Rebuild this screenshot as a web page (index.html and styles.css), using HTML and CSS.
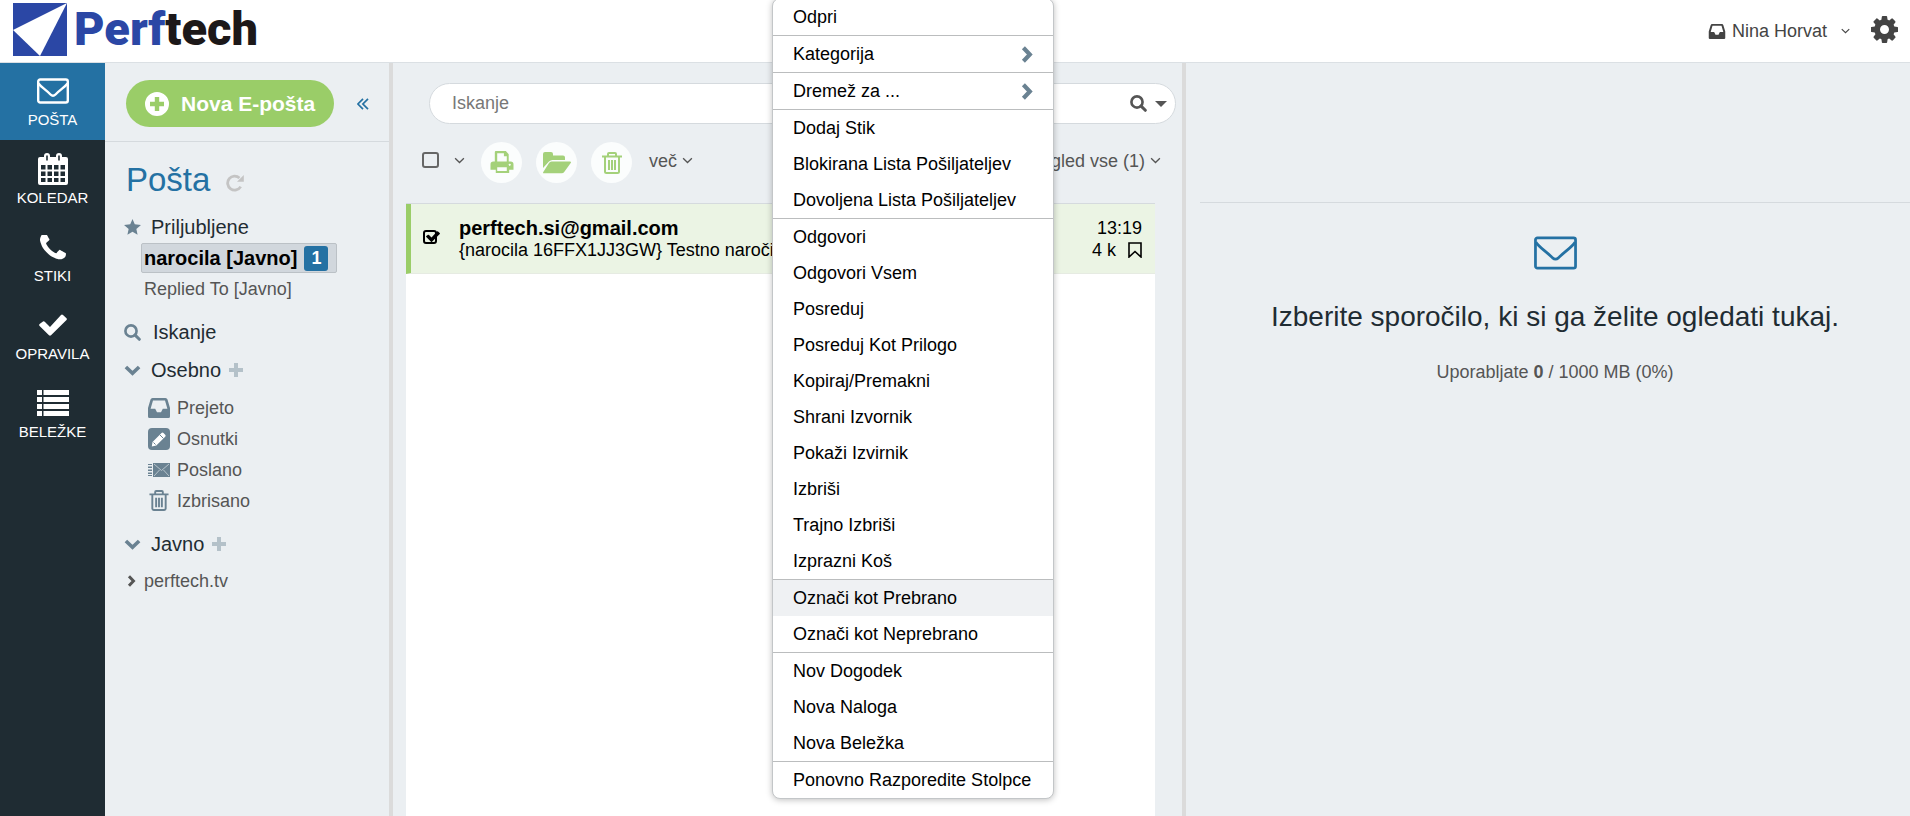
FILE: index.html
```html
<!DOCTYPE html>
<html lang="sl">
<head>
<meta charset="utf-8">
<title>Perftech – Pošta</title>
<link rel="stylesheet" href="styles.css">
</head>
<body>
<svg class="sprite" aria-hidden="true">
  <symbol id="mail" viewBox="0 0 32 26"><rect x="1.2" y="1.5" width="29.6" height="23" rx="2" fill="none" stroke="currentColor" stroke-width="2.4"/><path d="M1.5 5.500C4 9 8 11 13.500 16.500Q16 19 18.500 16.500C24 11 28 9 30.500 5.500" fill="none" stroke="currentColor" stroke-width="2.400"/></symbol>
  <symbol id="calendar" viewBox="0 0 30 32"><path fill="currentColor" fill-rule="evenodd" d="M2 4h4V3a3 3 0 0 1 6 0v1h6V3a3 3 0 0 1 6 0v1h4a2 2 0 0 1 2 2v24a2 2 0 0 1-2 2H2a2 2 0 0 1-2-2V6a2 2 0 0 1 2-2zM8.200 2.500v5h1.600v-5zm12 0v5h1.600v-5zM3 12v4.500h4.500V12zm6.500 0v4.500H14V12zm6.500 0v4.500h4.500V12zm6.500 0v4.500H27V12zM3 18.500V23h4.500v-4.500zm6.500 0V23H14v-4.500zm6.500 0V23h4.500v-4.500zm6.500 0V23H27v-4.500zM3 25v4h4.500v-4zm6.500 0v4H14v-4zm6.500 0v4h4.500v-4zm6.500 0v4H27v-4z"/></symbol>
  <symbol id="phone" viewBox="192 256 1408 1280"><path fill="currentColor" d="M1600 1240q0 27-10 70.500t-21 68.500q-21 50-122 106-94 51-186 51-27 0-53-3.500t-57.500-12.500-47-14.500-55.500-20.500-49-18q-98-35-175-83-127-79-264-216t-216-264q-48-77-83-175-3-9-18-49t-20.500-55.500-14.500-47-12.500-57.500-3.500-53q0-92 51-186 56-101 106-122 25-11 68.500-21t70.500-10q14 0 21 3 18 6 53 76 11 19 30 54t35 63.500 31 53.500q3 4 17.500 25t21.500 35.500 7 28.500q0 20-28.500 50t-62 55-62 53-28.500 46q0 9 5 22.500t8.500 20.500 14 24 11.500 19q76 137 174 235t235 174q2 1 19 11.500t24 14 20.500 8.500 22.500 5q18 0 46-28.500t53-62 55-62 50-28.500q14 0 28.500 7t35.500 21.500 25 17.500q25 15 53.500 31t63.500 35 54 30q70 35 76 53 3 7 3 21z"/></symbol>
  <symbol id="check" viewBox="0 0 28 22"><path fill="currentColor" d="M4 7.500Q5 7 6 8l5 5L22 1q1-1 2 0l3.500 3.200q.8.800 0 1.800L12 21.300q-1 .9-2 0L.6 12q-.9-1 0-2z"/></symbol>
  <symbol id="list" viewBox="0 0 32 26"><path fill="currentColor" d="M0 0h5v5H0zM6.500 0H32v5H6.500zM0 7h5v5H0zM6.500 7H32v5H6.500zM0 14h5v5H0zM6.500 14H32v5H6.500zM0 21h5v5H0zM6.500 21H32v5H6.500z"/></symbol>
  <symbol id="plus-circle" viewBox="0 0 24 24"><path fill="currentColor" fill-rule="evenodd" d="M12 0a12 12 0 1 1 0 24 12 12 0 0 1 0-24zM9.800 5v4.800H5v4.400h4.800V19h4.400v-4.800H19V9.800h-4.800V5z"/></symbol>
  <symbol id="dbl-left" viewBox="0 0 12 12"><path d="M6 .8.900 6 6 11.200M11 .8 5.900 6l5.100 5.200" fill="none" stroke="currentColor" stroke-width="1.700"/></symbol>
  <symbol id="refresh" viewBox="0 0 18 18"><path d="M14.700 12.600A7 7 0 1 1 13.500 4" fill="none" stroke="currentColor" stroke-width="2.800"/><path d="M17.800 1v6.800H11z" fill="currentColor"/></symbol>
  <symbol id="star" viewBox="0 0 18 17"><path fill="currentColor" d="M9 0l2.400 5.600 6.600.7-4.900 4.200 1.300 6.200L9 13.600l-5.400 3.100 1.300-6.200L0 6.300l6.600-.7z"/></symbol>
  <symbol id="search" viewBox="0 0 18 18"><circle cx="7.400" cy="7.400" r="5.900" fill="none" stroke="currentColor" stroke-width="2.800"/><path d="M11.800 11.800l4.400 4.400" stroke="currentColor" stroke-width="3.200" stroke-linecap="round"/></symbol>
  <symbol id="chev-down" viewBox="0 0 18 12"><path d="M1.800 2.200 9 9l7.200-6.800" fill="none" stroke="currentColor" stroke-width="4"/></symbol>
  <symbol id="chev-right" viewBox="0 0 12 18"><path d="M2.200 1.800 9 9l-6.800 7.200" fill="none" stroke="currentColor" stroke-width="4.400"/></symbol>
  <symbol id="angle" viewBox="0 0 12 8"><path d="M1 1.500 6 6.300l5-4.800" fill="none" stroke="currentColor" stroke-width="1.500"/></symbol>
  <symbol id="plus" viewBox="0 0 14 14"><path d="M7 0v14M0 7h14" stroke="currentColor" stroke-width="4"/></symbol>
  <symbol id="inbox" viewBox="0 0 22 20"><path fill="currentColor" fill-rule="evenodd" d="M4.500 0h13q1.500 0 2 1.500L22 10v8.500q0 1.500-1.500 1.500h-19Q0 20 0 18.500V10l2.500-8.500Q3 0 4.500 0zM5 2.400 2.600 10.800h4.600l1.800 3.500h4l1.800-3.500h4.600L17 2.400z"/></symbol>
  <symbol id="draft" viewBox="0 0 22 22"><rect width="22" height="22" rx="4" fill="currentColor"/><path d="M4.500 14 13.500 5q1-1 2 0l1.700 1.700q1 1 0 2L8.300 17.500l-4.500.9z" fill="#fff"/><path d="M11.800 6.800l3.600 3.600M5.500 14.500l2 2" stroke="currentColor" stroke-width="1"/></symbol>
  <symbol id="sent" viewBox="0 0 22 14"><path fill="currentColor" d="M5 0h17v14H5zM0 1h4v1H0zM0 3.500h4v1.500H0zM0 6.500h4V8H0zM0 9.500h4V11H0zM0 12h4v1H0z"/><path d="M6 1l7.500 6.500L21 1M6 13l5.500-6M21 13l-5.500-6" fill="none" stroke="#b7c4cc" stroke-width="1"/></symbol>
  <symbol id="trash" viewBox="0 0 20 22"><path fill="none" stroke="currentColor" stroke-width="2" d="M0 4.600h20M6 4V2q0-1 1-1h6q1 0 1 1v2M3 5v14.500Q3 21 4.500 21h11q1.500 0 1.500-1.500V5M7 8v10M10 8v10M13 8v10"/></symbol>
  <symbol id="printer" viewBox="0 0 24 24"><path fill="currentColor" fill-rule="evenodd" d="M5.500 0H16l3 3.500V11h2q3 0 3 3v5.500h-4.500V23h-14v-3.500H0V14q0-3 3-3h1.500V1.200Q4.500 0 5.500 0zM7 2.300V11h10V5.500h-3V2.300zM7 17v3.800h10V17zm13-3.700a1 1 0 1 0 .1 0z"/></symbol>
  <symbol id="folder" viewBox="0 0 28 22"><path fill="currentColor" d="M0 17V2Q0 0 2 0h6q2 0 2 2v1.500h10q2 0 2 2V8H9.500Q7.500 8 6 9.500L0 16zM8.500 9.500H27q1.500 0 .7 1.500l-6.500 9q-.9 1.200-2.500 1.200H1q-1.500 0-.7-1.300L6 11q.9-1.500 2.500-1.500z"/></symbol>
  <symbol id="bookmark" viewBox="0 0 14 16"><path d="M1 1h12v14l-6-5.500L1 15z" fill="none" stroke="currentColor" stroke-width="1.600"/></symbol>
  <symbol id="gear" viewBox="128 128 1536 1536"><path fill="currentColor" d="M1152 896q0-106-75-181t-181-75-181 75-75 181 75 181 181 75 181-75 75-181zm512-109v222q0 12-8 23t-20 13l-185 28q-19 54-39 91 35 50 107 138 10 12 10 25t-9 23q-27 37-99 108t-94 71q-12 0-26-9l-138-108q-44 23-91 38-16 136-29 186-7 28-36 28h-222q-14 0-24.500-8.500t-11.500-21.500l-28-184q-49-16-90-37l-141 107q-10 9-25 9-14 0-25-11-126-114-165-168-7-10-7-23 0-12 8-23 15-21 51-66.500t54-70.500q-27-50-41-99l-183-27q-13-2-21-12.500t-8-23.500v-222q0-12 8-23t19-13l186-28q14-46 39-92-40-57-107-138-10-12-10-24 0-10 9-23 26-36 98.500-107.500t94.500-71.500q13 0 26 10l138 107q44-23 91-38 16-136 29-186 7-28 36-28h222q14 0 24.500 8.500t11.500 21.500l28 184q49 16 90 37l142-107q9-9 24-9 13 0 25 10 129 119 165 170 7 8 7 22 0 12-8 23-15 21-51 66.500t-54 70.500q26 50 41 98l183 28q13 2 21 12.500t8 23.500z"/></symbol>
</svg>

<header class="topbar">
  <a class="logo" href="#">
    <svg width="54" height="53" viewBox="0 0 54 53" aria-hidden="true"><path fill="#2b47a5" d="M0 0h54v53H0z"/><path fill="#fff" d="M54 0 27 53 0 27z"/></svg>
    <span class="logo-text"><span class="logo-blue">Perf</span>tech</span>
  </a>
  <div class="account">
    <button class="user" type="button"><svg width="18" height="15"><use href="#inbox"/></svg>Nina Horvat<svg class="user-angle" width="9" height="6"><use href="#angle"/></svg></button>
    <button class="settings" type="button" aria-label="Nastavitve"><svg width="27" height="27"><use href="#gear"/></svg></button>
  </div>
</header>

<div class="app">
  <nav class="rail">
    <a class="rail-item active" href="#"><svg width="32" height="26"><use href="#mail"/></svg>POŠTA</a>
    <a class="rail-item" href="#"><svg width="30" height="32"><use href="#calendar"/></svg>KOLEDAR</a>
    <a class="rail-item" href="#"><svg width="26" height="25"><use href="#phone"/></svg>STIKI</a>
    <a class="rail-item" href="#"><svg width="28" height="22"><use href="#check"/></svg>OPRAVILA</a>
    <a class="rail-item" href="#"><svg width="32" height="26"><use href="#list"/></svg>BELEŽKE</a>
  </nav>

  <aside class="folders">
    <div class="compose-bar">
      <button class="compose" type="button"><svg width="24" height="24"><use href="#plus-circle"/></svg>Nova E-pošta</button>
      <button class="collapse" type="button" aria-label="Skrči"><svg width="12" height="12"><use href="#dbl-left"/></svg></button>
    </div>
    <h1 class="title">Pošta <svg width="18" height="18"><use href="#refresh"/></svg></h1>
    <h2 class="group"><svg width="17" height="16"><use href="#star"/></svg>Priljubljene</h2>
    <ul class="favorites">
      <li><a class="fav selected" href="#">narocila [Javno]<span class="count">1</span></a></li>
      <li><a class="fav" href="#">Replied To [Javno]</a></li>
    </ul>
    <h2 class="group group-search"><svg width="17" height="17"><use href="#search"/></svg>Iskanje</h2>
    <h2 class="group"><svg width="17" height="11"><use href="#chev-down"/></svg>Osebno<svg class="add" width="14" height="14"><use href="#plus"/></svg></h2>
    <ul class="tree">
      <li><a href="#"><svg width="22" height="20"><use href="#inbox"/></svg>Prejeto</a></li>
      <li><a href="#"><svg width="22" height="22"><use href="#draft"/></svg>Osnutki</a></li>
      <li><a href="#"><svg width="22" height="14"><use href="#sent"/></svg>Poslano</a></li>
      <li><a href="#"><svg width="22" height="21"><use href="#trash"/></svg>Izbrisano</a></li>
    </ul>
    <h2 class="group"><svg width="17" height="11"><use href="#chev-down"/></svg>Javno<svg class="add" width="14" height="14"><use href="#plus"/></svg></h2>
    <a class="public" href="#"><svg width="9" height="12"><use href="#chev-right"/></svg>perftech.tv</a>
  </aside>

  <main class="messages">
    <form class="search">
      <input type="text" placeholder="Iskanje" aria-label="Iskanje">
      <button type="button" aria-label="Išči"><svg width="17" height="17"><use href="#search"/></svg></button>
      <button type="button" aria-label="Možnosti iskanja"><span class="caret"></span></button>
    </form>
    <div class="tools">
      <input class="box" type="checkbox" aria-label="Izberi vse">
      <button class="plain pick" type="button" aria-label="Izbira"><svg width="11" height="7"><use href="#angle"/></svg></button>
      <button class="round" type="button" aria-label="Natisni"><svg width="24" height="23"><use href="#printer"/></svg></button>
      <button class="round" type="button" aria-label="Premakni"><svg width="28" height="22"><use href="#folder"/></svg></button>
      <button class="round" type="button" aria-label="Izbriši"><svg width="20" height="22"><use href="#trash"/></svg></button>
      <button class="plain more" type="button">več<svg width="11" height="7"><use href="#angle"/></svg></button>
      <button class="plain view" type="button">Pogled vse (1)<svg width="11" height="7"><use href="#angle"/></svg></button>
    </div>
    <div class="list">
      <article class="mail">
        <label class="mail-check"><input type="checkbox" checked aria-label="Izberi sporočilo"><svg width="14" height="11" aria-hidden="true"><use href="#check"/></svg></label>
        <div class="mail-body">
          <div class="from">perftech.si@gmail.com</div>
          <div class="subject">{narocila 16FFX1JJ3GW} Testno naročilo</div>
        </div>
        <div class="meta">
          <div>13:19</div>
          <div class="size">4 k<svg width="14" height="16"><use href="#bookmark"/></svg></div>
        </div>
      </article>
    </div>
  </main>

  <section class="preview">
    <div class="preview-head"></div>
    <svg class="preview-icon" width="43" height="34" viewBox="0 0 44 34"><rect x="1.500" y="1.500" width="41" height="31" rx="2" fill="none" stroke="currentColor" stroke-width="2.800"/><path d="M2 6C5 11 12 15 19 22Q22 24.500 25 22C32 15 39 11 42 6" fill="none" stroke="currentColor" stroke-width="2.800"/></svg>
    <p class="hint">Izberite sporočilo, ki si ga želite ogledati tukaj.</p>
    <p class="quota">Uporabljate <b>0</b> / 1000 MB (0%)</p>
  </section>
</div>

<div class="menu" role="menu">
  <button type="button" role="menuitem">Odpri</button>
  <hr>
  <button type="button" role="menuitem">Kategorija<svg width="12" height="17"><use href="#chev-right"/></svg></button>
  <hr>
  <button type="button" role="menuitem">Dremež za ...<svg width="12" height="17"><use href="#chev-right"/></svg></button>
  <hr>
  <button type="button" role="menuitem">Dodaj Stik</button>
  <button type="button" role="menuitem">Blokirana Lista Pošiljateljev</button>
  <button type="button" role="menuitem">Dovoljena Lista Pošiljateljev</button>
  <hr>
  <button type="button" role="menuitem">Odgovori</button>
  <button type="button" role="menuitem">Odgovori Vsem</button>
  <button type="button" role="menuitem">Posreduj</button>
  <button type="button" role="menuitem">Posreduj Kot Prilogo</button>
  <button type="button" role="menuitem">Kopiraj/Premakni</button>
  <button type="button" role="menuitem">Shrani Izvornik</button>
  <button type="button" role="menuitem">Pokaži Izvirnik</button>
  <button type="button" role="menuitem">Izbriši</button>
  <button type="button" role="menuitem">Trajno Izbriši</button>
  <button type="button" role="menuitem">Izprazni Koš</button>
  <hr>
  <button class="hover" type="button" role="menuitem">Označi kot Prebrano</button>
  <button type="button" role="menuitem">Označi kot Neprebrano</button>
  <hr>
  <button type="button" role="menuitem">Nov Dogodek</button>
  <button type="button" role="menuitem">Nova Naloga</button>
  <button type="button" role="menuitem">Nova Beležka</button>
  <hr>
  <button type="button" role="menuitem">Ponovno Razporedite Stolpce</button>
</div>
</body>
</html>
```
FILE: styles.css
```css
* { box-sizing: border-box; }
html, body { height: 100%; }
body {
  margin: 0;
  display: flex;
  flex-direction: column;
  overflow: hidden;
  background: #ebeff2;
  color: #555;
  font: 18px/22px "Liberation Sans", Arial, sans-serif;
}
.sprite { display: none; }
svg { flex: none; }
a { color: inherit; text-decoration: none; }
button, input { font: inherit; color: inherit; }
button { padding: 0; border: 0; background: none; cursor: pointer; }
ul { margin: 0; padding: 0; list-style: none; }

.topbar {
  display: flex;
  align-items: center;
  justify-content: space-between;
  flex: none;
  height: 63px;
  padding: 0 12px 4px 13px;
  background: #fff;
  border-bottom: 1px solid #dbe0e4;
}
.logo { display: flex; align-items: center; gap: 7px; color: #1c1819; }
.logo-text { font: 900 47px/54px Roboto, "Liberation Sans", sans-serif; }
.logo-blue { color: #2b47a5; }
.account { display: flex; align-items: center; gap: 21px; color: #444; }
.user { display: flex; align-items: center; gap: 6px; padding-top: 4px; }
.user-angle { margin-left: 8px; }
.settings { display: flex; }

.app { display: flex; flex: 1; min-height: 0; }

.rail { flex: none; width: 105px; background: #1f2c33; color: #fff; font-size: 15px; line-height: 18px; }
.rail-item {
  display: grid;
  grid-template-rows: 32px 18px;
  gap: 4px;
  place-items: center;
  height: 78px;
  padding-top: 13px;
  align-content: start;
}
.rail-item.active { height: 77px; padding-top: 12px; background: #2471a3; }

.folders { flex: none; width: 288px; border-right: 4px solid #dbdbdb; }
.compose-bar {
  display: flex;
  align-items: center;
  justify-content: space-between;
  height: 79px;
  padding: 3px 20px 0 21px;
  border-bottom: 1px solid #d5dade;
}
.compose {
  display: flex;
  align-items: center;
  gap: 12px;
  height: 47px;
  padding: 0 19px;
  border-radius: 24px;
  background: #9acd68;
  color: #fff;
  font-size: 21px;
  font-weight: bold;
}
.collapse { display: flex; color: #2471a3; }
.title {
  display: flex;
  align-items: center;
  gap: 16px;
  margin: 18px 0 11px 21px;
  color: #2471a3;
  font-size: 33px;
  font-weight: normal;
  line-height: 40px;
}
.title svg { color: #c4c4c4; margin-top: 6px; }
.group {
  display: flex;
  align-items: center;
  gap: 10px;
  margin: 0 0 0 19px;
  color: #1f2c33;
  font-size: 20px;
  font-weight: normal;
  line-height: 32px;
}
.group svg { color: #6a8292; }
.group .add { color: #b4c1c9; margin-left: -2px; }
.group-search { gap: 12px; margin: 12px 0 6px 19px; }
.favorites { padding-left: 36px; }
.fav { display: flex; align-items: center; width: 196px; height: 31px; padding: 0 2px; border: 1px solid transparent; }
.fav.selected { height: 30px; background: #d1d7dd; border-color: #bbc1c6; border-radius: 2px; color: #000; font-size: 20px; font-weight: bold; }
.count {
  width: 24px;
  margin-left: 7px;
  border-radius: 3px;
  background: #2471a3;
  color: #fff;
  font-size: 18px;
  line-height: 25px;
  text-align: center;
}
.tree { padding: 6px 0 12px 43px; }
.tree a { display: flex; align-items: center; gap: 7px; height: 31px; }
.tree svg { color: #6a8292; }
.public { display: flex; align-items: center; gap: 8px; margin: 10px 0 0 22px; }

.messages {
  display: flex;
  flex-direction: column;
  flex: 789 1 0;
  min-width: 0;
  border-right: 4px solid #dbdbdb;
}
.search {
  display: flex;
  align-items: center;
  flex: none;
  gap: 8px;
  height: 41px;
  margin: 20px 6px 0 36px;
  padding: 0 8px 0 22px;
  border: 1px solid #d5dade;
  border-radius: 21px;
  background: #fff;
}
.search input { flex: 1; min-width: 0; padding: 0 0 2px; border: 0; outline: 0; background: none; }
.search input::placeholder { color: #777; }
.search button { display: flex; }
.caret { border: 6px solid transparent; border-top-color: currentColor; border-bottom-width: 0; }
.tools { display: flex; align-items: center; flex: none; height: 79px; padding: 0 21px 2px 29px; }
.box {
  appearance: none;
  width: 17px;
  height: 16px;
  margin: 0 15px 6px 0;
  border: 2px solid #666;
  border-radius: 3px;
}
.plain { display: flex; align-items: center; gap: 5px; margin-bottom: 4px; }
.pick { margin-right: 16px; }
.round {
  display: flex;
  align-items: center;
  justify-content: center;
  width: 41px;
  height: 41px;
  margin-right: 14px;
  border-radius: 50%;
  background: #fbfdfd;
  color: #a4d17a;
}
.more { margin-left: 3px; }
.view { margin-left: auto; }
.list { flex: 1; margin: 0 27px 0 13px; border-top: 1px solid #d5dade; background: #fff; }
.mail {
  display: grid;
  grid-template-columns: 36px 1fr auto;
  align-items: start;
  height: 70px;
  padding: 13px 13px 0 12px;
  border-left: 5px solid #9acd68;
  border-bottom: 1px solid #e6ebe2;
  background: #ebf4e4;
  color: #000;
}
.mail-check { display: grid; margin-top: 13px; }
.mail-check > * { grid-area: 1 / 1; }
.mail-check input { appearance: none; width: 14px; height: 14px; margin: 0; border: 2px solid #000; border-radius: 3px; }
.mail-check svg { margin: 1px 0 0 3px; }
.from { font-size: 20px; font-weight: bold; }
.meta { text-align: right; }
.size { display: flex; align-items: center; gap: 12px; }

.preview {
  display: flex;
  flex-direction: column;
  align-items: center;
  flex: 710 1 0;
  min-width: 0;
  margin-left: 14px;
  text-align: center;
}
.preview-head { align-self: stretch; height: 140px; border-bottom: 1px solid #d5dade; }
.preview-icon { margin-top: 33px; color: #2471a3; }
.hint { margin: 29px 0 0; color: #1f2c33; font-size: 28px; line-height: 36px; }
.quota { margin: 26px 0 0; }

.menu {
  position: absolute;
  top: -2px;
  left: 772px;
  display: flex;
  flex-direction: column;
  width: 282px;
  border: 1px solid #c3c6c8;
  border-radius: 8px;
  overflow: hidden;
  background: #fff;
  box-shadow: 0 1px 6px rgba(0, 0, 0, 0.25);
  color: #000;
}
.menu hr { width: 100%; margin: 0; border: 0; border-top: 1px solid #bbbdbe; }
.menu button {
  display: flex;
  align-items: center;
  justify-content: space-between;
  height: 36px;
  padding: 0 20px;
}
.menu button.hover { background: #eff1f3; }
.menu svg { color: #6a8292; }
```
